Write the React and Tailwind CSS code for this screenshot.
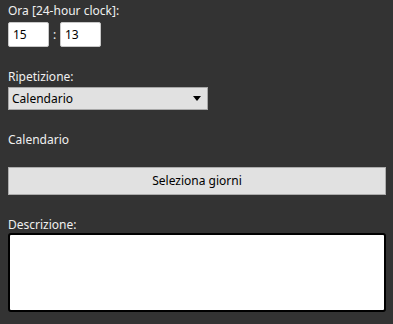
export default function App() {
  return (
    <div
      className="w-[393px] h-[324px] bg-[#333333] text-[#f0f0f0] text-[12px] px-2 pt-[3px]"
      style={{ fontFamily: '"Noto Sans", "Open Sans", sans-serif' }}
    >
      {/* Ora */}
      <div className="leading-[16px]">Ora [24-hour clock]:</div>
      <div className="flex items-center mt-[3px]">
        <input
          type="text"
          defaultValue="15"
          className="w-[41px] h-[25px] bg-white text-black border border-[#c8c8c8] rounded-[2px] pl-[4px] outline-none text-[12px]"
        />
        <span className="w-[11px] text-center">:</span>
        <input
          type="text"
          defaultValue="13"
          className="w-[41px] h-[25px] bg-white text-black border border-[#c8c8c8] rounded-[2px] pl-[4px] outline-none text-[12px]"
        />
      </div>

      {/* Ripetizione */}
      <div className="leading-[16px] mt-[22px]">Ripetizione:</div>
      <div className="mt-[2px] w-[200px] h-[23px] bg-[#e1e1e1] border border-[#a8a8a8] text-black flex items-center justify-between pl-[3px] pr-[6px]">
        <span>Calendario</span>
        <svg width="8" height="5" viewBox="0 0 8 5">
          <path d="M0 0 H8 L4 5 Z" fill="#000" />
        </svg>
      </div>

      <div className="leading-[16px] mt-[22px]">Calendario</div>

      <button className="mt-[19px] w-[378px] h-[28px] bg-[#e1e1e1] border border-[#adadad] text-black text-[12px] flex items-center justify-center">
        Seleziona giorni
      </button>

      <div className="leading-[16px] mt-[22px]">Descrizione:</div>
      <textarea className="block w-[378px] h-[79px] bg-white border-2 border-black rounded-[3px] resize-none outline-none text-black" />
    </div>
  );
}
